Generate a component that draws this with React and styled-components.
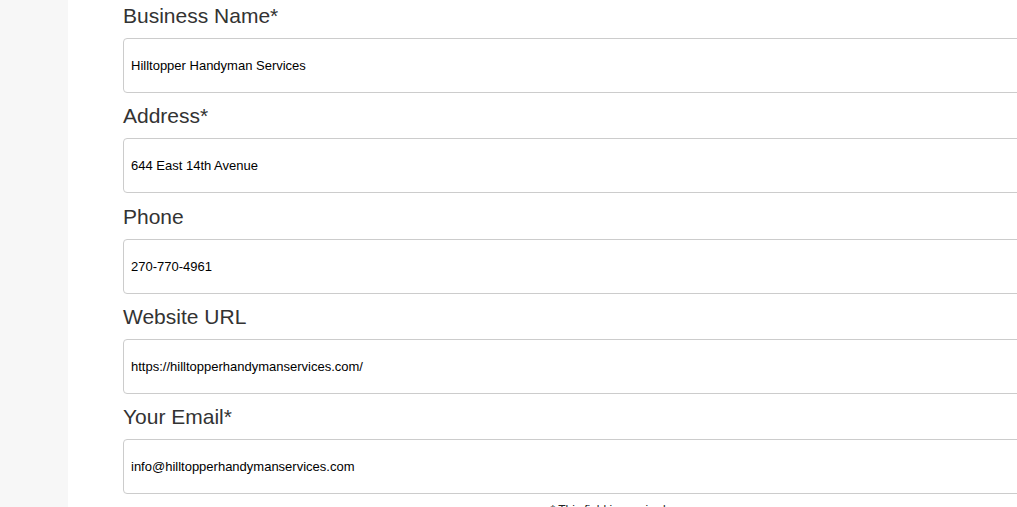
import React from 'react';
import styled, { createGlobalStyle } from 'styled-components';

const GlobalStyle = createGlobalStyle`
  html, body {
    margin: 0;
    padding: 0;
    background: #ffffff;
    overflow: hidden;
  }
  body {
    font-family: "Liberation Sans", Arial, sans-serif;
  }
`;

const fields = [
  { label: 'Business Name*', value: 'Hilltopper Handyman Services' },
  { label: 'Address*', value: '644 East 14th Avenue' },
  { label: 'Phone', value: '270-770-4961' },
  { label: 'Website URL', value: 'https://hilltopperhandymanservices.com/' },
  { label: 'Your Email*', value: 'info@hilltopperhandymanservices.com' },
];

const App = () => {
  return (
    <>
      <GlobalStyle />
      <Page>
        <Sidebar />
        <Main>
          <Form onSubmit={(e) => e.preventDefault()}>
            {fields.map((field) => (
              <Group key={field.label}>
                <Label>{field.label}</Label>
                <Input type="text" defaultValue={field.value} />
              </Group>
            ))}
            <Note>* This field is required</Note>
          </Form>
        </Main>
      </Page>
    </>
  );
};

export default App;

// Styled Components
const Page = styled.div`
  display: flex;
  width: 100vw;
  height: 100vh;
  overflow: hidden;
`;

const Sidebar = styled.aside`
  width: 68px;
  flex-shrink: 0;
  background: #f7f7f7;
`;

const Main = styled.main`
  flex: 1;
  padding: 4px 0 0 55px;
  background: #ffffff;
`;

const Form = styled.form`
  width: 970px;
`;

const Group = styled.div`
  margin-bottom: 11.25px;
`;

const Label = styled.label`
  display: block;
  font-size: 21px;
  line-height: 24px;
  color: #333333;
  margin-bottom: 10px;
`;

const Input = styled.input`
  display: block;
  box-sizing: border-box;
  width: 100%;
  height: 55px;
  padding: 0 7px;
  border: 1px solid #cccccc;
  border-radius: 4px;
  background: #ffffff;
  font-family: "Liberation Sans", Arial, sans-serif;
  font-size: 13px;
  color: #000000;
  outline: none;
`;

const Note = styled.p`
  margin: -2px 0 0;
  text-align: center;
  font-size: 12px;
  line-height: 14px;
  color: #222222;
`;
